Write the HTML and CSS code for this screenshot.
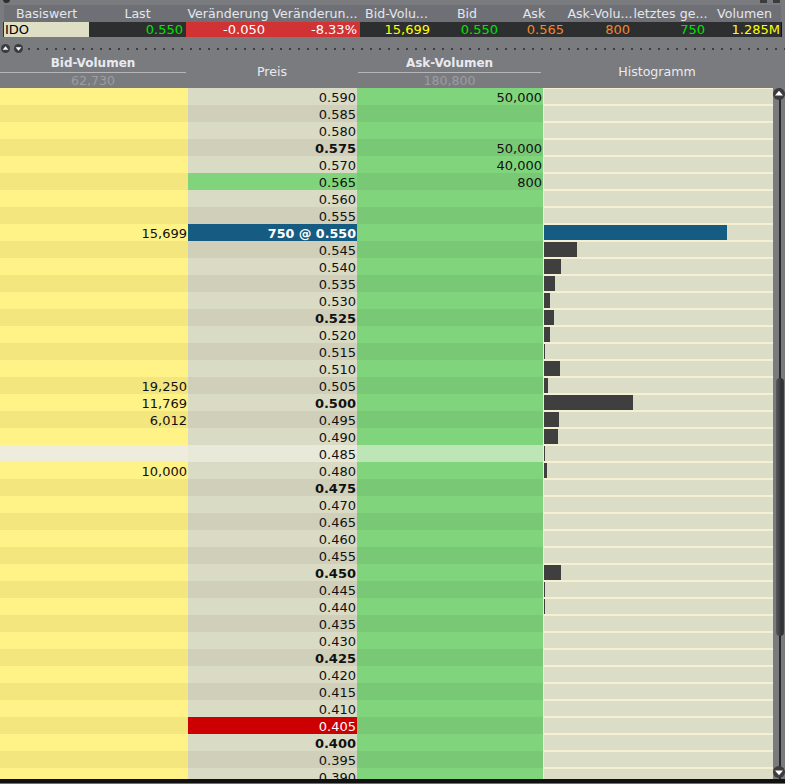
FILE: index.html
```html
<!DOCTYPE html>
<html lang="de">
<head>
<meta charset="utf-8">
<title>Kurs-Tafel</title>
<link rel="stylesheet" href="styles.css">
</head>
<body>
<div class="app">
  <div class="titlebar">
    <span class="title-dot"></span>
    <span class="title-text">Kurs-Tafel</span>
    <span class="title-ctl"></span>
    <span class="title-ctl"></span>
  </div>
  <div class="summary">
    <div class="sum-row sum-head">
      <span>Basiswert</span><span>Last</span><span>Veränderung</span><span>Veränderun...</span><span>Bid-Volu...</span><span>Bid</span><span>Ask</span><span>Ask-Volu...</span><span>letztes ge...</span><span>Volumen</span>
    </div>
    <div class="sum-row sum-data">
      <span class="d-name">IDO</span>
      <span class="d-green">0.550</span>
      <span class="d-red d-change">-0.050</span>
      <span class="d-red">-8.33%</span>
      <span class="d-yellow">15,699</span>
      <span class="d-green">0.550</span>
      <span class="d-orange">0.565</span>
      <span class="d-orange">800</span>
      <span class="d-green">750</span>
      <span class="d-yellow d-last">1.285M</span>
    </div>
  </div>
  <div class="splitter">
    <span class="split-btn"><svg viewBox="0 0 11 11"><circle cx="5.5" cy="5.5" r="5.5" fill="#3c3c3f"/><path d="M5.5 2.6 9 7H2z" fill="#fff"/></svg></span>
    <span class="split-btn"><svg viewBox="0 0 11 11"><circle cx="5.5" cy="5.5" r="5.5" fill="#3c3c3f"/><path d="M5.5 8.4 9 4H2z" fill="#fff"/></svg></span>
    <span class="split-dots"></span>
  </div>
  <div class="ladder-head">
    <div class="lh lh-bid"><b>Bid-Volumen</b><span>62,730</span></div>
    <div class="lh lh-price">Preis</div>
    <div class="lh lh-ask"><b>Ask-Volumen</b><span>180,800</span></div>
    <div class="lh lh-hist">Histogramm</div>
  </div>
  <div class="ladder">
    <div class="rows">
      <div class="row"><div class="c bid"></div><div class="c price">0.590</div><div class="c ask">50,000</div><div class="hist"></div></div>
      <div class="row alt"><div class="c bid"></div><div class="c price">0.585</div><div class="c ask"></div><div class="hist"></div></div>
      <div class="row"><div class="c bid"></div><div class="c price">0.580</div><div class="c ask"></div><div class="hist"></div></div>
      <div class="row alt"><div class="c bid"></div><div class="c price strong">0.575</div><div class="c ask">50,000</div><div class="hist"></div></div>
      <div class="row"><div class="c bid"></div><div class="c price">0.570</div><div class="c ask">40,000</div><div class="hist"></div></div>
      <div class="row alt"><div class="c bid"></div><div class="c price p-ask">0.565</div><div class="c ask">800</div><div class="hist"></div></div>
      <div class="row"><div class="c bid"></div><div class="c price">0.560</div><div class="c ask"></div><div class="hist"></div></div>
      <div class="row alt"><div class="c bid"></div><div class="c price">0.555</div><div class="c ask"></div><div class="hist"></div></div>
      <div class="row"><div class="c bid">15,699</div><div class="c price p-last">750 @ 0.550</div><div class="c ask"></div><div class="hist"><i class="bar bar-last" style="width:183px"></i></div></div>
      <div class="row alt"><div class="c bid"></div><div class="c price">0.545</div><div class="c ask"></div><div class="hist"><i class="bar" style="width:33px"></i></div></div>
      <div class="row"><div class="c bid"></div><div class="c price">0.540</div><div class="c ask"></div><div class="hist"><i class="bar" style="width:17px"></i></div></div>
      <div class="row alt"><div class="c bid"></div><div class="c price">0.535</div><div class="c ask"></div><div class="hist"><i class="bar" style="width:11px"></i></div></div>
      <div class="row"><div class="c bid"></div><div class="c price">0.530</div><div class="c ask"></div><div class="hist"><i class="bar" style="width:6px"></i></div></div>
      <div class="row alt"><div class="c bid"></div><div class="c price strong">0.525</div><div class="c ask"></div><div class="hist"><i class="bar" style="width:10px"></i></div></div>
      <div class="row"><div class="c bid"></div><div class="c price">0.520</div><div class="c ask"></div><div class="hist"><i class="bar" style="width:6px"></i></div></div>
      <div class="row alt"><div class="c bid"></div><div class="c price">0.515</div><div class="c ask"></div><div class="hist"><i class="bar" style="width:1px"></i></div></div>
      <div class="row"><div class="c bid"></div><div class="c price">0.510</div><div class="c ask"></div><div class="hist"><i class="bar" style="width:16px"></i></div></div>
      <div class="row alt"><div class="c bid">19,250</div><div class="c price">0.505</div><div class="c ask"></div><div class="hist"><i class="bar" style="width:4px"></i></div></div>
      <div class="row"><div class="c bid">11,769</div><div class="c price strong">0.500</div><div class="c ask"></div><div class="hist"><i class="bar" style="width:89px"></i></div></div>
      <div class="row alt"><div class="c bid">6,012</div><div class="c price">0.495</div><div class="c ask"></div><div class="hist"><i class="bar" style="width:15px"></i></div></div>
      <div class="row"><div class="c bid"></div><div class="c price">0.490</div><div class="c ask"></div><div class="hist"><i class="bar" style="width:14px"></i></div></div>
      <div class="row hl"><div class="c bid"></div><div class="c price">0.485</div><div class="c ask"></div><div class="hist"><i class="bar" style="width:1px"></i></div></div>
      <div class="row"><div class="c bid">10,000</div><div class="c price">0.480</div><div class="c ask"></div><div class="hist"><i class="bar" style="width:3px"></i></div></div>
      <div class="row alt"><div class="c bid"></div><div class="c price strong">0.475</div><div class="c ask"></div><div class="hist"></div></div>
      <div class="row"><div class="c bid"></div><div class="c price">0.470</div><div class="c ask"></div><div class="hist"></div></div>
      <div class="row alt"><div class="c bid"></div><div class="c price">0.465</div><div class="c ask"></div><div class="hist"></div></div>
      <div class="row"><div class="c bid"></div><div class="c price">0.460</div><div class="c ask"></div><div class="hist"></div></div>
      <div class="row alt"><div class="c bid"></div><div class="c price">0.455</div><div class="c ask"></div><div class="hist"></div></div>
      <div class="row"><div class="c bid"></div><div class="c price strong">0.450</div><div class="c ask"></div><div class="hist"><i class="bar" style="width:17px"></i></div></div>
      <div class="row alt"><div class="c bid"></div><div class="c price">0.445</div><div class="c ask"></div><div class="hist"><i class="bar" style="width:1px"></i></div></div>
      <div class="row"><div class="c bid"></div><div class="c price">0.440</div><div class="c ask"></div><div class="hist"><i class="bar" style="width:1px"></i></div></div>
      <div class="row alt"><div class="c bid"></div><div class="c price">0.435</div><div class="c ask"></div><div class="hist"></div></div>
      <div class="row"><div class="c bid"></div><div class="c price">0.430</div><div class="c ask"></div><div class="hist"></div></div>
      <div class="row alt"><div class="c bid"></div><div class="c price strong">0.425</div><div class="c ask"></div><div class="hist"></div></div>
      <div class="row"><div class="c bid"></div><div class="c price">0.420</div><div class="c ask"></div><div class="hist"></div></div>
      <div class="row alt"><div class="c bid"></div><div class="c price">0.415</div><div class="c ask"></div><div class="hist"></div></div>
      <div class="row"><div class="c bid"></div><div class="c price">0.410</div><div class="c ask"></div><div class="hist"></div></div>
      <div class="row alt"><div class="c bid"></div><div class="c price p-low">0.405</div><div class="c ask"></div><div class="hist"></div></div>
      <div class="row"><div class="c bid"></div><div class="c price strong">0.400</div><div class="c ask"></div><div class="hist"></div></div>
      <div class="row alt"><div class="c bid"></div><div class="c price">0.395</div><div class="c ask"></div><div class="hist"></div></div>
      <div class="row"><div class="c bid"></div><div class="c price">0.390</div><div class="c ask"></div><div class="hist"></div></div>
    </div>
    <div class="scrollbar">
      <svg class="sb-btn sb-up" viewBox="0 0 12 12"><circle cx="6" cy="6" r="6" fill="#3c3c3f"/><path d="M6 2.8 10 7.4H2z" fill="#fff"/></svg>
      <div class="sb-thumb"></div>
      <svg class="sb-btn sb-down" viewBox="0 0 12 12"><circle cx="6" cy="6" r="6" fill="#3c3c3f"/><path d="M6 9.2 10 4.6H2z" fill="#fff"/></svg>
    </div>
  </div>
  <div class="footer"></div>
</div>
</body>
</html>
```
FILE: styles.css
```css
html, body {
  margin: 0;
  padding: 0;
  background: #7a7b7f;
  overflow: hidden;
}
.app {
  width: 785px;
  height: 784px;
  overflow: hidden;
  display: flex;
  flex-direction: column;
  font-family: "DejaVu Sans", Verdana, sans-serif;
  font-size: 13px;
  color: #111;
}
.titlebar {
  height: 5px;
  flex: none;
  overflow: hidden;
  display: flex;
  align-items: flex-start;
  padding-right: 5px;
  background: #7a7b7f;
}
.title-dot {
  width: 7px;
  height: 7px;
  margin: -4px 0 0 3px;
  border-radius: 50%;
  background: #2e2e30;
  flex: none;
}
.title-text {
  margin: -11px 0 0 9px;
  font-weight: bold;
  font-size: 12px;
  line-height: 15px;
  color: #eceef2;
  flex: 1;
}
.title-ctl {
  width: 7px;
  height: 3px;
  margin-left: 6px;
  background: #3c3c3f;
  flex: none;
}
.summary {
  flex: none;
  padding-left: 4px;
}
.sum-row {
  display: grid;
  grid-template-columns: 85px 97px 84px 90px 73px 68px 66px 66px 75px 73px;
  width: 777px;
}
.sum-head {
  height: 17px;
  line-height: 17px;
  font-size: 12.6px;
  text-align: center;
  color: #e4e7ee;
  background: #6f7075;
  white-space: nowrap;
}
.sum-head span {
  display: block;
  min-width: 0;
}
.sum-data {
  height: 15px;
  line-height: 15px;
  background: #2d2e30;
  text-align: right;
  border-right: 1px solid #111;
  box-shadow: -1px 0 0 #2d2e30;
}
.sum-data span {
  padding-right: 3px;
  white-space: nowrap;
}
.sum-data .d-name {
  text-align: left;
  color: #000;
  background: #dfdfc5;
  padding-left: 1px;
}
.d-green { color: #00e400; }
.d-red { color: #fff; background: #d13234; }
.d-yellow { color: #ffff00; }
.d-orange { color: #f5872b; }
.sum-data .d-change { padding-right: 5px; }
.sum-data .d-last { padding-right: 1px; }
.splitter {
  height: 18px;
  flex: none;
  display: flex;
  align-items: center;
  padding: 7px 0 2px 1px;
  box-sizing: border-box;
  gap: 4px;
}
.split-btn {
  width: 9px;
  height: 9px;
  display: block;
  flex: none;
}
.split-btn svg {
  display: block;
  width: 9px;
  height: 9px;
}
.split-dots {
  flex: 1;
  height: 2px;
  margin-left: 1px;
  background: repeating-linear-gradient(to right, #3c3d40 0 2px, transparent 2px 9px);
}
.ladder-head {
  height: 33px;
  flex: none;
  display: grid;
  grid-template-columns: 186px 172px 183px 232px 12px;
  font-size: 12.6px;
  color: #e8eaf0;
}
.lh {
  display: flex;
  flex-direction: column;
  align-items: stretch;
  justify-content: center;
  text-align: center;
}
.lh b {
  display: block;
  height: 17px;
  line-height: 17px;
  font-size: 12px;
  border-bottom: 1px solid #b5b6b9;
}
.lh span {
  display: block;
  height: 15px;
  line-height: 15px;
  color: #9c9da1;
}
.ladder {
  height: 691px;
  flex: none;
  display: flex;
  overflow: hidden;
}
.rows {
  width: 773px;
  flex: none;
}
.row {
  display: grid;
  grid-template-columns: 188px 169px 186px 230px;
  height: 17px;
}
.c {
  height: 17px;
  line-height: 19px;
  text-align: right;
  padding-right: 1px;
  white-space: nowrap;
}
.bid { background: #fff286; }
.price { background: #dadbc4; }
.ask { background: #80d47c; }
.alt .bid { background: #f3e67f; }
.alt .price { background: #cfcfba; }
.alt .ask { background: #79c876; }
.hl .bid { background: #eeecdc; }
.hl .price { background: #e9e9da; }
.hl .ask { background: #bde5b5; }
.strong { font-weight: bold; }
.row .p-ask { background: #80d47c; }
.row .p-last { background: #155b82; color: #fff; font-weight: bold; font-size: 12.7px; }
.row .p-low { background: #cc0000; color: #fff; }
.hist {
  height: 17px;
  box-sizing: border-box;
  background: #dcddc6;
  border-top: 1px solid #f5f0d3;
  border-bottom: 1px solid #f5f0d3;
  border-left: 1px solid #f5f0d3;
}
.bar {
  display: block;
  height: 15px;
  background: #3f3f3f;
}
.bar-last { background: #155b82; }
.scrollbar {
  position: relative;
  width: 12px;
  flex: none;
  background: linear-gradient(to right, transparent 6px, #2a2a2c 6px, #2a2a2c 8px, transparent 8px);
}
.sb-btn {
  position: absolute;
  left: 0;
  width: 12px;
  height: 12px;
}
.sb-up { top: 0; }
.sb-down { bottom: 1px; }
.sb-thumb {
  position: absolute;
  left: 3px;
  top: 290px;
  width: 8px;
  height: 258px;
  border-radius: 4px;
  background: linear-gradient(to right, #5a5b5f, #2f3034 70%, #3a3b3f);
}
.footer {
  height: 5px;
  flex: none;
  box-sizing: border-box;
  border-top: 4px solid #111;
  background: #6f7075;
}
```
